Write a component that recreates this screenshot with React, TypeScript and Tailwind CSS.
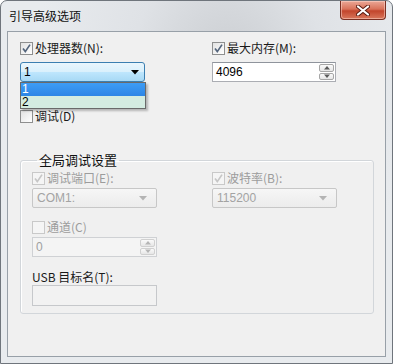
import React from "react";

const F = "font-['Noto_Sans_CJK_SC',sans-serif]";
const N = "font-['Liberation_Sans','Noto_Sans_CJK_SC',sans-serif]";

function Check({ checked, disabled }: { checked?: boolean; disabled?: boolean }) {
  return (
    <span
      className={`flex h-[13px] w-[13px] shrink-0 items-center justify-center border ${
        disabled
          ? "border-[#c9c9c9] bg-[#f5f5f5]"
          : "border-[#8e8f8f] bg-[linear-gradient(135deg,#e2e2e2,#ffffff)]"
      }`}
    >
      {checked && (
        <svg width="11" height="11" viewBox="0 0 11 11">
          <path
            d="M2 5.5 L4.3 8.6 L9 1.6"
            fill="none"
            stroke={disabled ? "#c6c6c6" : "#55667d"}
            strokeWidth="1.7"
          />
        </svg>
      )}
    </span>
  );
}

function Label({
  text,
  checked,
  disabled,
}: {
  text: string;
  checked?: boolean;
  disabled?: boolean;
}) {
  return (
    <div className="flex h-[14px] items-center gap-[2px]">
      <Check checked={checked} disabled={disabled} />
      <span
        className={`${F} text-[12px] leading-[14px] ${
          disabled ? "text-[#9c9c9c]" : "text-[#1a1a1a]"
        }`}
      >
        {text}
      </span>
    </div>
  );
}

function Arrow({ color }: { color: string }) {
  return (
    <svg width="8" height="5" viewBox="0 0 8 5">
      <path d="M0 0 H8 L4 4.5 Z" fill={color} />
    </svg>
  );
}

function DisabledCombo({ value }: { value: string }) {
  return (
    <div className="flex h-[20px] w-[125px] items-center justify-between rounded-[2px] border border-[#c7c7c7] bg-[linear-gradient(#f6f6f6,#ececec)] pl-[4px] pr-[9px]">
      <span className={`${N} text-[12px] leading-[14px] text-[#a3a3a3]`}>{value}</span>
      <Arrow color="#b4b4b4" />
    </div>
  );
}

function SpinBtns({ disabled }: { disabled?: boolean }) {
  const c = disabled ? "#b5b5b5" : "#5a5a5a";
  const b = disabled ? "border-[#d0d0d0]" : "border-[#a6a6a6]";
  return (
    <div className="flex h-full w-[16px] flex-col gap-[1px] py-[1px] pr-[1px]">
      <div
        className={`flex flex-1 items-center justify-center rounded-[2px] border ${b} bg-[linear-gradient(#fafafa,#e6e6e6)]`}
      >
        <svg width="6" height="4" viewBox="0 0 6 4">
          <path d="M0 3.5 H6 L3 0 Z" fill={c} />
        </svg>
      </div>
      <div
        className={`flex flex-1 items-center justify-center rounded-[2px] border ${b} bg-[linear-gradient(#fafafa,#e6e6e6)]`}
      >
        <svg width="6" height="4" viewBox="0 0 6 4">
          <path d="M0 0.5 H6 L3 4 Z" fill={c} />
        </svg>
      </div>
    </div>
  );
}

export default function App() {
  return (
    <div className="flex h-[364px] w-[393px] flex-col overflow-hidden rounded-t-[7px] border border-[#6f757c] bg-[radial-gradient(ellipse_at_58%_20%,#c9ccd0_0%,#dfe2e6_30%,#e8ebee_60%)]">
      {/* title bar */}
      <div className="flex h-[30px] shrink-0 items-start justify-between">
        <span className={`${F} pl-[8px] pt-[7px] text-[12px] leading-[16px] text-[#111]`}>
          引导高级选项
        </span>
        <div className="mr-[6px] flex h-[19px] w-[46px] items-center justify-center rounded-b-[4px] border border-t-0 border-[#7a2f22] bg-[linear-gradient(#eba897_0%,#d9725a_45%,#c2452c_55%,#d9775c_100%)] shadow-[inset_0_0_0_1px_rgba(255,220,210,0.5)]">
          <svg width="14" height="11" viewBox="0 0 14 11">
            <path
              d="M2 1.5 L12 9.5 M12 1.5 L2 9.5"
              stroke="#5a1c12"
              strokeWidth="4"
              strokeLinecap="round"
            />
            <path
              d="M2 1.5 L12 9.5 M12 1.5 L2 9.5"
              stroke="#ffffff"
              strokeWidth="2.2"
              strokeLinecap="round"
            />
          </svg>
        </div>
      </div>

      {/* client area */}
      <div className="mx-[6px] flex flex-1 flex-col border border-[#98a0a8] bg-[#f0f0f0] pl-[12px] pr-[11px] pt-[9px]">
        <div className="grid grid-cols-[192px_1fr]">
          <div className="flex flex-col">
            <Label text="处理器数(N):" checked />
            <div className="relative mt-[7px] w-[125px]">
              <div className="flex h-[20px] items-center justify-between rounded-[3px] border border-[#3c7fb1] bg-[linear-gradient(#eaf6fd_0%,#d9f0fc_50%,#bee6fd_51%,#a7d9f5_100%)] pl-[3px] pr-[5px]">
                <span className={`${N} text-[12px] leading-[14px] text-[#000]`}>1</span>
                <Arrow color="#000" />
              </div>
              <div className="absolute left-0 top-full z-10 w-[126px] border border-[#6a6a6a] bg-[#d4ece1] shadow-[2px_2px_2px_rgba(0,0,0,0.25)]">
                <div
                  className={`${N} h-[13px] bg-[linear-gradient(#3d9cf5,#2d86e6)] pl-[1px] text-[12px] leading-[13px] text-white`}
                >
                  1
                </div>
                <div className={`${N} h-[12px] pl-[1px] text-[12px] leading-[12px] text-[#000]`}>
                  2
                </div>
              </div>
            </div>
            <div className="mt-[27px]">
              <Label text="调试(D)" />
            </div>
          </div>
          <div className="flex flex-col">
            <Label text="最大内存(M):" checked />
            <div className="mt-[7px] flex h-[20px] w-[124px] items-center justify-between border border-[#abadb3] border-t-[#8f949c] bg-white">
              <span className={`${N} pl-[3px] text-[12px] leading-[14px] text-[#000]`}>4096</span>
              <SpinBtns />
            </div>
          </div>
        </div>

        <fieldset className="mt-[29px] w-[354px] rounded-[3px] border border-[#d2d6da] pb-[7px] pl-[11px] shadow-[inset_1px_1px_0_#ffffff]">
          <legend className={`${F} ml-[5px] px-[2px] text-[13px] leading-[16px] text-[#111]`}>
            全局调试设置
          </legend>
          <div className="grid grid-cols-[180px_1fr] pt-[3px]">
            <div className="flex flex-col">
              <Label text="调试端口(E):" checked disabled />
              <div className="mt-[3px]">
                <DisabledCombo value="COM1:" />
              </div>
            </div>
            <div className="flex flex-col">
              <Label text="波特率(B):" checked disabled />
              <div className="mt-[3px]">
                <DisabledCombo value="115200" />
              </div>
            </div>
          </div>
          <div className="mt-[12px]">
            <Label text="通道(C)" disabled />
          </div>
          <div className="mt-[3px] flex h-[20px] w-[125px] items-center justify-between border border-[#cfd1d4] bg-[#f4f4f4]">
            <span className={`${N} pl-[3px] text-[12px] leading-[14px] text-[#a0a0a0]`}>0</span>
            <SpinBtns disabled />
          </div>
          <div className={`${F} mt-[13px] h-[14px] text-[12px] leading-[14px] text-[#1a1a1a]`}>
            USB 目标名(T):
          </div>
          <div className="mt-[1px] h-[21px] w-[125px] border border-[#c6c8cb] bg-[#f2f2f2]" />
        </fieldset>
      </div>
      <div className="h-[6px] shrink-0" />
    </div>
  );
}
